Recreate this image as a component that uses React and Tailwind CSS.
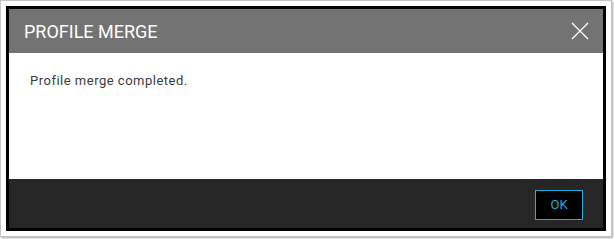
import React from "react";

const App = () => {
  return (
    <div className="w-[614px] h-[239px] bg-white">
      <div className="w-[612px] h-[237px] border border-[#c4c4c4] bg-white p-[5px] shadow-[1px_1px_2px_rgba(0,0,0,0.35)]">
        <div className="h-full border-[3px] border-black flex flex-col font-['Roboto',sans-serif]">
          {/* Header */}
          <div className="h-[44px] bg-[#737373] flex items-center justify-between pl-[15px] pr-[14px]">
            <span className="text-white text-[18px]">PROFILE MERGE</span>
            <svg width="18" height="18" viewBox="0 0 18 18" className="text-white">
              <path d="M1 1 L17 17 M17 1 L1 17" stroke="currentColor" strokeWidth="1.3" fill="none" />
            </svg>
          </div>

          {/* Body */}
          <div className="h-[126px] bg-white pl-[21px] pt-[18px]">
            <p className="text-[13px] text-[#3c3c3c] tracking-[0.5px]">Profile merge completed.</p>
          </div>

          {/* Footer */}
          <div className="flex-1 bg-[#262626] flex items-start justify-end pt-[11px] pr-[20px]">
            <button className="w-[48px] h-[30px] bg-black border border-[#1fb0d6] text-[#1fb0d6] text-[13px]">
              OK
            </button>
          </div>
        </div>
      </div>
    </div>
  );
};

export default App;
